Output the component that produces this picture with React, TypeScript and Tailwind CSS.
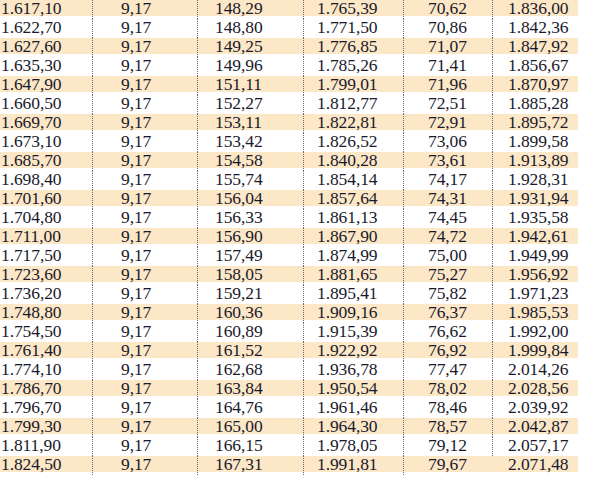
const rows: string[][] = [
  ["1.617,10", "9,17", "148,29", "1.765,39", "70,62", "1.836,00"],
  ["1.622,70", "9,17", "148,80", "1.771,50", "70,86", "1.842,36"],
  ["1.627,60", "9,17", "149,25", "1.776,85", "71,07", "1.847,92"],
  ["1.635,30", "9,17", "149,96", "1.785,26", "71,41", "1.856,67"],
  ["1.647,90", "9,17", "151,11", "1.799,01", "71,96", "1.870,97"],
  ["1.660,50", "9,17", "152,27", "1.812,77", "72,51", "1.885,28"],
  ["1.669,70", "9,17", "153,11", "1.822,81", "72,91", "1.895,72"],
  ["1.673,10", "9,17", "153,42", "1.826,52", "73,06", "1.899,58"],
  ["1.685,70", "9,17", "154,58", "1.840,28", "73,61", "1.913,89"],
  ["1.698,40", "9,17", "155,74", "1.854,14", "74,17", "1.928,31"],
  ["1.701,60", "9,17", "156,04", "1.857,64", "74,31", "1.931,94"],
  ["1.704,80", "9,17", "156,33", "1.861,13", "74,45", "1.935,58"],
  ["1.711,00", "9,17", "156,90", "1.867,90", "74,72", "1.942,61"],
  ["1.717,50", "9,17", "157,49", "1.874,99", "75,00", "1.949,99"],
  ["1.723,60", "9,17", "158,05", "1.881,65", "75,27", "1.956,92"],
  ["1.736,20", "9,17", "159,21", "1.895,41", "75,82", "1.971,23"],
  ["1.748,80", "9,17", "160,36", "1.909,16", "76,37", "1.985,53"],
  ["1.754,50", "9,17", "160,89", "1.915,39", "76,62", "1.992,00"],
  ["1.761,40", "9,17", "161,52", "1.922,92", "76,92", "1.999,84"],
  ["1.774,10", "9,17", "162,68", "1.936,78", "77,47", "2.014,26"],
  ["1.786,70", "9,17", "163,84", "1.950,54", "78,02", "2.028,56"],
  ["1.796,70", "9,17", "164,76", "1.961,46", "78,46", "2.039,92"],
  ["1.799,30", "9,17", "165,00", "1.964,30", "78,57", "2.042,87"],
  ["1.811,90", "9,17", "166,15", "1.978,05", "79,12", "2.057,17"],
  ["1.824,50", "9,17", "167,31", "1.991,81", "79,67", "2.071,48"],
];

// column widths and text offsets, measured off the print
const cols = [
  "w-[92px] pl-[1px]",
  "w-[105px] pl-[28px] border-l",
  "w-[106px] pl-[17px] border-l",
  "w-[100px] pl-[13px] border-l",
  "w-[89px] pl-[24px] border-l",
  "w-[86px] pl-[15px] border-l",
];

export default function App() {
  return (
    <div className="h-[482px] w-[590px] overflow-hidden bg-white font-['Liberation_Serif',serif] text-[17.5px] tracking-[-0.1px] text-[#1a1a2c]">
      {rows.map((row, r) => (
        <div key={r} className="flex h-[19px]">
          {row.map((v, c) => (
            <div
              key={c}
              className={[
                cols[c],
                "h-[19px] border-dotted border-[#6a6a74] leading-[17px]",
                r % 2 === 0
                  ? "bg-[linear-gradient(to_bottom,#fce7c7_16px,transparent_16px)]"
                  : "",
                r === rows.length - 1 && c === 5 ? "border-l-transparent" : "",
              ].join(" ")}
            >
              {v}
            </div>
          ))}
        </div>
      ))}
    </div>
  );
}
